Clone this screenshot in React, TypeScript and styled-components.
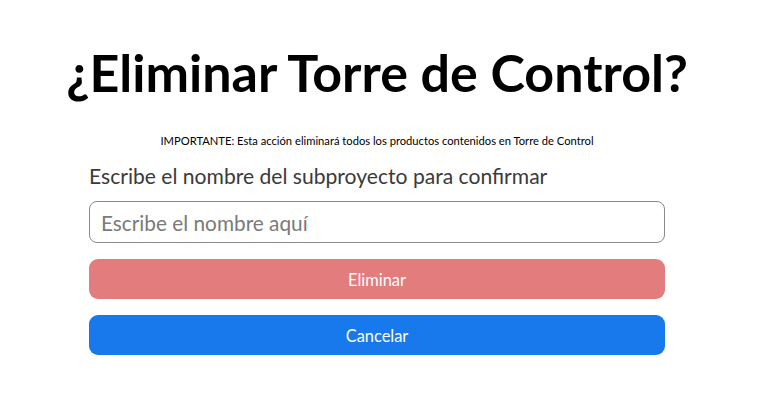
import React from "react";
import styled, { createGlobalStyle } from "styled-components";

const Global = createGlobalStyle`
  html, body { margin: 0; padding: 0; background: #ffffff; }
  body { font-family: "Lato", "Noto Sans", sans-serif; }
`;

const Dialog = styled.div`
  width: 754px;
  padding-top: 40px;
  display: flex;
  flex-direction: column;
  align-items: center;
`;

const Title = styled.h1`
  margin: 0;
  font-size: 52px;
  font-weight: 700;
  color: #000;
  line-height: 64px;
`;

const Notice = styled.p`
  margin: 30px 0 0;
  font-size: 11.2px;
  color: #000;
  line-height: 14px;
`;

const Form = styled.div`
  width: 576px;
  margin-top: 14px;
  display: flex;
  flex-direction: column;
`;

const Label = styled.label`
  font-size: 21.1px;
  color: #3a3a3a;
  line-height: 28px;
`;

const Input = styled.input`
  margin-top: 11px;
  box-sizing: border-box;
  height: 42px;
  width: 100%;
  border: 1px solid #8a8a8a;
  border-radius: 8px;
  padding: 0 11px;
  font-family: inherit;
  font-size: 20.8px;
  color: #333;
  outline: none;
  &::placeholder { color: #7a7a7a; }
`;

const Button = styled.button<{ $bg: string }>`
  margin-top: 16px;
  height: 40px;
  width: 100%;
  border: none;
  border-radius: 9px;
  background: ${(p) => p.$bg};
  color: #fff;
  font-family: inherit;
  font-size: 16.4px;
  cursor: pointer;
`;

export default function App() {
  return (
    <>
      <Global />
      <Dialog>
        <Title>¿Eliminar Torre de Control?</Title>
        <Notice>IMPORTANTE: Esta acción eliminará todos los productos contenidos en Torre de Control</Notice>
        <Form>
          <Label>Escribe el nombre del subproyecto para confirmar</Label>
          <Input placeholder="Escribe el nombre aquí" />
          <Button $bg="#e37c7c">Eliminar</Button>
          <Button $bg="#1879ec">Cancelar</Button>
        </Form>
      </Dialog>
    </>
  );
}
